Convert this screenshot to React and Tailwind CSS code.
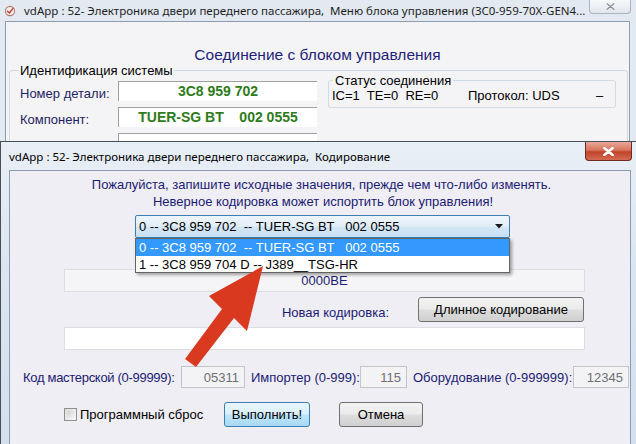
import React from "react";

const CloseGlyph = ({ color = "#ffffff", w = 10, h = 8, sw = 2 }) => (
  <svg width={w} height={h} viewBox="0 0 10 8">
    <path d="M1.2 0.8 L8.8 7.2 M8.8 0.8 L1.2 7.2" stroke={color} strokeWidth={sw} strokeLinecap="round" />
  </svg>
);

const AppIcon = () => (
  <svg width="12" height="12" viewBox="0 0 12 12" className="shrink-0">
    <circle cx="6" cy="6" r="4.6" fill="#f4eeee" stroke="#b77a6a" strokeWidth="1.1" />
    <path d="M3.4 6.2 L5.4 8 L8.8 3.6" fill="none" stroke="#c0392b" strokeWidth="1.4" strokeLinecap="round" strokeLinejoin="round" />
  </svg>
);

const Btn = ({ children, className = "", primary = false }) => (
  <div
    className={
      "flex items-center justify-center rounded-[3px] border text-[13px] text-black " +
      (primary
        ? "border-[#3c7fb1] bg-[linear-gradient(#eaf6fd_0%,#d9f0fc_48%,#bee6fd_52%,#a7d9f5_100%)] "
        : "border-[#707070] bg-[linear-gradient(#f2f2f2_0%,#ebebeb_48%,#dddddd_52%,#cfcfcf_100%)] ") +
      className
    }
  >
    {children}
  </div>
);

export default function App() {
  return (
    <div className="relative w-[636px] h-[444px] overflow-hidden bg-[#e3e9f1] font-['Liberation_Sans',Arial,sans-serif] text-[13px] leading-[15px]">
      {/* Main window */}
      <div className="flex h-[21px] items-center">
        <div className="ml-[4px]">
          <AppIcon />
        </div>
        <span className="ml-[8px] whitespace-pre font-['Noto_Sans',sans-serif] text-[11.5px] text-[#1e1e1e]">
          vdApp : 52- Электроника двери переднего пассажира,  Меню блока управления (3C0-959-70X-GEN4...
        </span>
        <div className="ml-auto mr-[5px] self-start flex h-[14px] w-[42px] items-center justify-center rounded-b-[4px] border border-t-0 border-[#a9b3c2] bg-[linear-gradient(#f7f9fb,#e1e6ed)]">
          <CloseGlyph color="#8a909a" w={9} h={7} sw={1.3} />
        </div>
      </div>
      <div className="ml-[5px] mr-[6px] h-[120px] overflow-hidden border border-b-0 border-[#8e9cb0] bg-[#f4f4f6]">
        <div className="mt-[25px] text-center text-[15.5px] leading-[16px] text-[#1f1f7a]">
          Соединение с блоком управления
        </div>
        <fieldset className="ml-[3px] mr-[1px] rounded-[3px] border border-[#d3d9e0] pl-[10px] pb-[10px]">
          <legend className="-ml-[1px] px-[1px] text-[13px] leading-[15px] text-black">Идентификация системы</legend>
          <div className="flex">
            <div className="flex flex-col">
              <div className="mt-[3px] flex items-center">
                <div className="w-[98px] pt-[4px] text-[#1e2262]">Номер детали:</div>
                <div className="flex h-[20px] w-[199px] items-center justify-center border-l border-t border-[#a0a0a0] bg-white text-[14px] font-bold text-[#2f7b1b]">
                  3C8 959 702
                </div>
              </div>
              <div className="mt-[6px] flex items-center">
                <div className="w-[98px] pt-[5px] text-[#1e2262]">Компонент:</div>
                <div className="flex h-[20px] w-[199px] items-center justify-center whitespace-pre border-l border-t border-[#a0a0a0] bg-white text-[14px] font-bold text-[#2f7b1b]">
                  TUER-SG BT    002 0555
                </div>
              </div>
              <div className="mt-[6px] flex items-start">
                <div className="w-[98px]" />
                <div className="h-[20px] w-[199px] border-l border-t border-[#a0a0a0] bg-white" />
              </div>
            </div>
            <fieldset className="ml-[11px] -mt-[5px] h-[35px] w-[288px] rounded-[3px] border border-[#d3d9e0] pl-[3px]">
              <legend className="ml-[1px] px-[2px] text-[13px] leading-[15px] text-black">Статус соединения</legend>
              <div className="flex text-black">
                <span className="w-[136px] whitespace-pre">IC=1  TE=0  RE=0</span>
                <span className="w-[128px]">Протокол: UDS</span>
                <span>–</span>
              </div>
            </fieldset>
          </div>
        </fieldset>
      </div>

      {/* Coding dialog */}
      <div className="absolute left-0 top-[141px] flex h-[310px] w-[636px] flex-col border-l border-t border-[#4a4f57] bg-[linear-gradient(180deg,#e9eff6_0%,#dbe5f1_40%,#d3dfee_100%)]">
        <div className="flex h-[28px] items-center">
          <span className="ml-[8px] whitespace-pre font-['Noto_Sans',sans-serif] text-[11.5px] text-black">
            vdApp : 52- Электроника двери переднего пассажира,  Кодирование
          </span>
          <div className="ml-auto mr-[4px] self-start flex h-[19px] w-[47px] items-center justify-center rounded-b-[4px] border border-t-0 border-[#6d2a20] bg-[linear-gradient(#e8a898_0%,#d6755e_45%,#c2432a_55%,#d36a52_100%)]">
            <CloseGlyph color="#ffffff" w={11} h={9} sw={2.2} />
          </div>
        </div>
        <div className="ml-[8px] mr-[5px] flex-1 border border-[#8d9bb0] bg-[#efeef4]">
          <div className="mt-[6px] text-center leading-[16px] text-[#1b1b73]">
            <div className="pl-[3px]">Пожалуйста, запишите исходные значения, прежде чем что-либо изменять.</div>
            <div className="mt-[1px] pl-[6px]">Неверное кодировка может испортить блок управления!</div>
          </div>
          <div className="ml-[125px] mt-[5px] flex h-[23px] w-[375px] items-center rounded-[2px] border border-[#3c7fb1] bg-[linear-gradient(#edf5fb_0%,#e2eef8_48%,#d3e6f5_52%,#c8dff2_100%)] pl-[3px] pr-[6px]">
            <span className="whitespace-pre text-black">0 -- 3C8 959 702  -- TUER-SG BT   002 0555</span>
            <svg className="ml-auto" width="8" height="5" viewBox="0 0 8 5">
              <path d="M0 0 H8 L4 4.5 Z" fill="#1a1a1a" />
            </svg>
          </div>
          <div className="ml-[54px] mt-[31px] flex h-[23px] w-[521px] items-center justify-center border border-[#dcdde3] bg-[#f5f5f7] text-[#1b1b73]">
            0000BE
          </div>
          <div className="mt-[5px] flex">
            <div className="w-[379px] pt-[8px] text-right text-[#1b1b73]">Новая кодировка:</div>
            <Btn className="ml-[29px] h-[25px] w-[166px]">Длинное кодирование</Btn>
          </div>
          <div className="ml-[54px] mt-[5px] h-[23px] w-[521px] border border-[#dcdde3] bg-white" />
          <div className="ml-[13px] mt-[16px] flex items-center whitespace-nowrap text-[#1b1b73]">
            <div className="w-[158px] tracking-[-0.3px]">Код мастерской (0-99999):</div>
            <div className="flex h-[22px] w-[64px] items-center justify-end border border-[#c4c4c8] bg-[#f3f3f5] pr-[5px] text-[#6f6f74]">05311</div>
            <div className="ml-[6px] w-[109px]">Импортер (0-999):</div>
            <div className="flex h-[22px] w-[47px] items-center justify-end border border-[#c4c4c8] bg-[#f3f3f5] pr-[5px] text-[#6f6f74]">115</div>
            <div className="ml-[6px] w-[160px]">Оборудование (0-999999):</div>
            <div className="flex h-[22px] w-[56px] items-center justify-end border border-[#c4c4c8] bg-[#f3f3f5] pr-[5px] text-[#6f6f74]">12345</div>
          </div>
          <div className="ml-[54px] mt-[14px] flex items-center">
            <div className="h-[13px] w-[13px] border border-[#8f8f8f] bg-[linear-gradient(135deg,#dcdcdc,#f8f8f8)] p-[2px]">
              <div className="h-full w-full bg-[linear-gradient(135deg,#cfcfcf,#f4f4f4)]" />
            </div>
            <div className="ml-[3px] w-[144px] text-black">Программный сброс</div>
            <Btn primary className="h-[25px] w-[86px]">Выполнить!</Btn>
            <Btn className="ml-[29px] h-[25px] w-[84px]">Отмена</Btn>
          </div>
        </div>
      </div>

      {/* Open dropdown list */}
      <div className="absolute left-[135px] top-[238px] flex h-[35px] w-[375px] flex-col border border-[#646464] bg-white shadow-[2px_2px_3px_rgba(0,0,0,0.35)]">
        <div className="flex h-[17px] items-center bg-[#3399ff] pl-[3px] text-white whitespace-pre">0 -- 3C8 959 702  -- TUER-SG BT   002 0555</div>
        <div className="flex h-[16px] items-center pl-[3px] text-black whitespace-pre">1 -- 3C8 959 704 D -- J389__TSG-HR</div>
      </div>

      {/* Red annotation arrow */}
      <svg className="pointer-events-none absolute left-0 top-0" width="636" height="444" viewBox="0 0 636 444">
        <polygon
          points="263,266 247,331 234,318 196,367 185,359 222,309 209,296"
          fill="#d8391f"
        />
      </svg>
    </div>
  );
}
